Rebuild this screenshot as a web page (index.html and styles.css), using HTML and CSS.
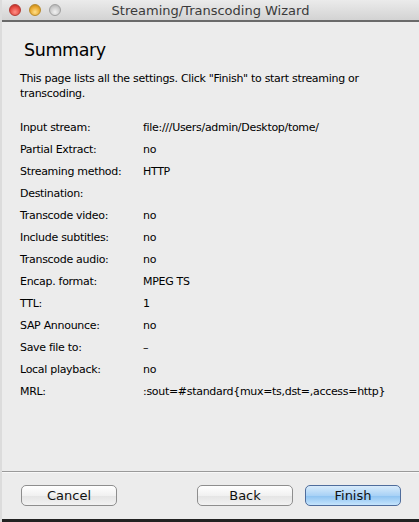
FILE: index.html
```html
<!DOCTYPE html>
<html lang="en">
<head>
  <meta charset="UTF-8">
  <title>Streaming/Transcoding Wizard</title>
  <link rel="stylesheet" href="styles.css">
</head>
<body>

<div class="window">
  <div class="titlebar">
    <div class="lights">
      <span class="light red"></span>
      <span class="light yellow"></span>
      <span class="light grey"></span>
    </div>
    <div class="title">Streaming/Transcoding Wizard</div>
  </div>

  <div class="content">
    <h1>Summary</h1>
    <p class="intro">This page lists all the settings. Click "Finish" to start streaming or transcoding.</p>

    <div class="summary">
      <div class="lbl">Input stream:</div><div class="val">file:///Users/admin/Desktop/tome/</div>
      <div class="lbl">Partial Extract:</div><div class="val">no</div>
      <div class="lbl">Streaming method:</div><div class="val">HTTP</div>
      <div class="lbl">Destination:</div><div class="val"></div>
      <div class="lbl">Transcode video:</div><div class="val">no</div>
      <div class="lbl">Include subtitles:</div><div class="val">no</div>
      <div class="lbl">Transcode audio:</div><div class="val">no</div>
      <div class="lbl">Encap. format:</div><div class="val">MPEG TS</div>
      <div class="lbl">TTL:</div><div class="val">1</div>
      <div class="lbl">SAP Announce:</div><div class="val">no</div>
      <div class="lbl">Save file to:</div><div class="val">–</div>
      <div class="lbl">Local playback:</div><div class="val">no</div>
      <div class="lbl">MRL:</div><div class="val">:sout=#standard{mux=ts,dst=,access=http}</div>
    </div>
  </div>

  <div class="footer">
    <button class="btn">Cancel</button>
    <div class="spacer"></div>
    <button class="btn">Back</button>
    <button class="btn primary">Finish</button>
  </div>
  <div class="bottom-edge"></div>
</div>

</body>
</html>
```

FILE: styles.css
```css
html, body {
  margin: 0;
  padding: 0;
  background: #ececec;
}

body {
  font-family: "Lucida Grande", "DejaVu Sans", sans-serif;
  font-size: 11px;
  letter-spacing: -0.3px;
  color: #000;
}

.window {
  width: 419px;
  height: 522px;
  display: flex;
  flex-direction: column;
  background: #ececec;
  border-left: 2px solid #dcdcdc;
  box-sizing: border-box;
  overflow: hidden;
}

.titlebar {
  height: 20px;
  flex: none;
  display: flex;
  align-items: center;
  background: linear-gradient(#ebebeb, #d3d3d3);
  border-bottom: 2px solid #6a6a6a;
  position: relative;
}

.lights {
  display: flex;
  gap: 8px;
  padding-left: 7px;
}

.light {
  width: 12px;
  height: 12px;
  border-radius: 50%;
  box-sizing: border-box;
}

.light.red {
  background: radial-gradient(circle at 50% 70%, #ff8f86, #e2463d 60%, #a8231c);
  border: 1px solid #b33a33;
}

.light.yellow {
  background: radial-gradient(circle at 50% 70%, #ffe08a, #e6a52a 60%, #b07a16);
  border: 1px solid #b88a2a;
}

.light.grey {
  background: radial-gradient(circle at 50% 70%, #f2f2f2, #c8c8c8 60%, #a8a8a8);
  border: 1px solid #a0a0a0;
}

.title {
  position: absolute;
  left: 0;
  right: 0;
  text-align: center;
  font-size: 13px;
  letter-spacing: 0;
  color: #3a3a3a;
  pointer-events: none;
}

.content {
  flex: 1;
  padding: 16px 0 0 18px;
}

h1 {
  font-weight: normal;
  font-size: 17.5px;
  letter-spacing: -0.4px;
  margin: 0 0 0 4px;
  line-height: 24px;
}

.intro {
  margin: 9px 30px 0 0;
  line-height: 15px;
}

.summary {
  display: grid;
  grid-template-columns: 123px 1fr;
  grid-auto-rows: 22px;
  align-items: center;
  margin-top: 15px;
}

.footer {
  flex: none;
  height: 47px;
  border-top: 1px solid #9a9a9a;
  box-shadow: inset 0 1px 0 #f8f8f8;
  display: flex;
  align-items: center;
  padding: 0 18px 0 19px;
  gap: 12px;
}

.spacer {
  flex: 1;
}

.btn {
  width: 96px;
  height: 21px;
  font-family: inherit;
  font-size: 13px;
  letter-spacing: 0;
  border: 1px solid #8e8e8e;
  border-radius: 5px;
  background: linear-gradient(#ffffff, #f1f1f1 50%, #e4e4e4 51%, #f2f2f2);
  color: #111;
  padding: 0;
}

.btn.primary {
  border-color: #4f6d9c;
  background: linear-gradient(#d8ebfb, #a9d2f6 50%, #8cc2f1 51%, #c5e4fc);
}

.bottom-edge {
  height: 3px;
  flex: none;
  background: #222;
}
```
